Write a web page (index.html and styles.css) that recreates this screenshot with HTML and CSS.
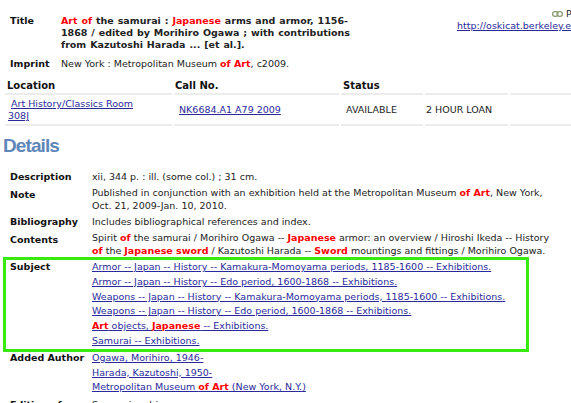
FILE: index.html
```html
<!DOCTYPE html>
<html lang="en">
  <head>
    <meta charset="UTF-8" />
    <title>Art of the samurai - OskiCat</title>
    <link rel="stylesheet" href="styles.css">
  </head>
  <body>
    <div class="page">
      <!-- Title / Imprint + permalink -->
      <div class="bib-top">
        <table class="bib-info">
          <tr>
            <th>Title</th>
            <td class="title">
              <span class="hit">Art of</span> the samurai : <span class="hit">Japanese</span> arms and armor, 1156-<wbr>1868 / edited by Morihiro Ogawa ; with contributions from Kazutoshi Harada ... [et al.].
            </td>
          </tr>
          <tr>
            <th>Imprint</th>
            <td>New York : Metropolitan Museum <span class="hit">of Art</span>, c2009.</td>
          </tr>
        </table>
        <div class="permalink">
          <div class="perm-line">
            <svg class="chain" width="11" height="6" viewBox="0 0 11 6">
              <rect x="0.6" y="0.6" width="5.4" height="4.8" rx="2.4" />
              <rect x="5" y="0.6" width="5.4" height="4.8" rx="2.4" />
            </svg>
            Permalink
          </div>
          <a href="#">http://oskicat.berkeley.edu/record=b18158364~S1</a>
        </div>
      </div>

      <!-- Holdings -->
      <table class="holdings">
        <tr>
          <th class="c1">Location</th>
          <th class="c2">Call No.</th>
          <th class="c3">Status</th>
          <th class="c4"></th>
          <th class="c5"></th>
        </tr>
        <tr>
          <td class="c1 loc"><a href="#">Art History/Classics Room 308J</a></td>
          <td class="c2"><a href="#">NK6684.A1 A79 2009</a></td>
          <td class="c3">AVAILABLE</td>
          <td class="c4">2 HOUR LOAN</td>
          <td class="c5"></td>
        </tr>
      </table>

      <h2 class="details-head">Details</h2>

      <div class="details">
        <div class="field">
          <div class="label">Description</div>
          <div class="value">xii, 344 p. : ill. (some col.) ; 31 cm.</div>
        </div>
        <div class="field">
          <div class="label low">Note</div>
          <div class="value">Published in conjunction with an exhibition held at the Metropolitan Museum <span class="hit">of Art</span>, New York, Oct. 21, 2009-Jan. 10, 2010.</div>
        </div>
        <div class="field">
          <div class="label">Bibliography</div>
          <div class="value">Includes bibliographical references and index.</div>
        </div>
        <div class="field">
          <div class="label low">Contents</div>
          <div class="value">Spirit <span class="hit">of</span> the samurai / Morihiro Ogawa -- <span class="hit">Japanese</span> armor: an overview / Hiroshi Ikeda -- History <span class="hit">of</span> the <span class="hit">Japanese sword</span> / Kazutoshi Harada -- <span class="hit">Sword</span> mountings and fittings / Morihiro Ogawa.</div>
        </div>

        <div class="field subject-box">
          <div class="label">Subject</div>
          <div class="value links">
            <a href="#">Armor -- Japan -- History -- Kamakura-Momoyama periods, 1185-1600 -- Exhibitions.</a>
            <a href="#">Armor -- Japan -- History -- Edo period, 1600-1868 -- Exhibitions.</a>
            <a href="#">Weapons -- Japan -- History -- Kamakura-Momoyama periods, 1185-1600 -- Exhibitions.</a>
            <a href="#">Weapons -- Japan -- History -- Edo period, 1600-1868 -- Exhibitions.</a>
            <a href="#"><span class="hit">Art</span> objects, <span class="hit">Japanese</span> -- Exhibitions.</a>
            <a href="#">Samurai -- Exhibitions.</a>
          </div>
        </div>

        <div class="field">
          <div class="label">Added Author</div>
          <div class="value links">
            <a href="#">Ogawa, Morihiro, 1946-</a>
            <a href="#">Harada, Kazutoshi, 1950-</a>
            <a href="#">Metropolitan Museum <span class="hit">of Art</span> (New York, N.Y.)</a>
          </div>
        </div>
        <div class="field">
          <div class="label">Edition of</div>
          <div class="value">Samurai no bi.</div>
        </div>
      </div>
    </div>
  </body>
</html>
```

FILE: styles.css
```css
html, body {
  margin: 0;
  padding: 0;
  background: #fff;
  overflow: hidden;
}
body {
  font-family: "DejaVu Sans", Verdana, sans-serif;
  font-size: 9.5px;
  line-height: 12px;
  color: #222;
}
.page {
  width: 571px;
  overflow: hidden;
}
a {
  color: #2a2a9c;
}
.hit {
  color: #f00;
  font-weight: bold;
}

/* top block */
.bib-top {
  display: flex;
  padding-top: 15px;
}
.bib-info {
  border-collapse: collapse;
  table-layout: fixed;
  width: 361px;
  flex: none;
}
.bib-info th {
  text-align: left;
  vertical-align: top;
  padding: 0 0 0 10px;
  width: 41px;
  color: #111;
}
.bib-info td {
  padding: 0 0 0 10px;
  vertical-align: top;
  white-space: nowrap;
}
.bib-info td.title {
  white-space: normal;
  font-weight: bold;
  word-spacing: 0.6px;
  padding-bottom: 7px;
}
.permalink {
  flex: none;
  white-space: nowrap;
  margin: -7px 0 0 96px;
}
.perm-line {
  padding-left: 95px;
  height: 12px;
  line-height: 12px;
}
.chain {
  fill: none;
  stroke: #8a9a6e;
  stroke-width: 1.2;
  vertical-align: 0;
}

/* holdings table */
.holdings {
  border-collapse: separate;
  border-spacing: 2px 0;
  table-layout: fixed;
  margin: 9px 0 0 3px;
  width: 620px;
}
.holdings th,
.holdings td {
  box-sizing: border-box;
}
.holdings th {
  text-align: left;
  font-size: 10px;
  line-height: 14px;
  padding: 0 0 0 2px;
  border-bottom: 2px solid #ececec;
  color: #111;
}
.holdings th.c2 { padding-left: 1px; }
.holdings td {
  padding: 3px 0 2px 3px;
  border-bottom: 2px solid #ececec;
  vertical-align: middle;
}
.c1 { width: 167px; }
.c2 { width: 165px; }
.c3 { width: 82px; }
.c4 { width: 83px; }
.holdings td.loc { text-indent: 3px; padding-right: 20px; }
.holdings td.c2 { padding-left: 5px; }
.holdings td.c3 { padding-left: 5px; }
.holdings td.c4 { padding-left: 1px; }

/* details */
.details-head {
  margin: 8px 0 0 3px;
  font-family: "Liberation Sans", Arial, sans-serif;
  font-size: 19px;
  letter-spacing: -0.9px;
  line-height: 24px;
  color: #5f86b8;
}
.details {
  display: flex;
  flex-direction: column;
  gap: 3px;
  margin-top: 12px;
}
.field {
  display: grid;
  grid-template-columns: 82px 466px;
  padding-left: 10px;
  line-height: 13px;
}
.label {
  font-weight: bold;
  color: #111;
}
.label.low {
  padding-top: 2px;
}
.links a {
  display: block;
  line-height: 14.8px;
}
.subject-box {
  width: 516px;
  margin: -3px 0 -4px 3px;
  padding-left: 4px;
  border: 3px solid #39ea10;
}
```
